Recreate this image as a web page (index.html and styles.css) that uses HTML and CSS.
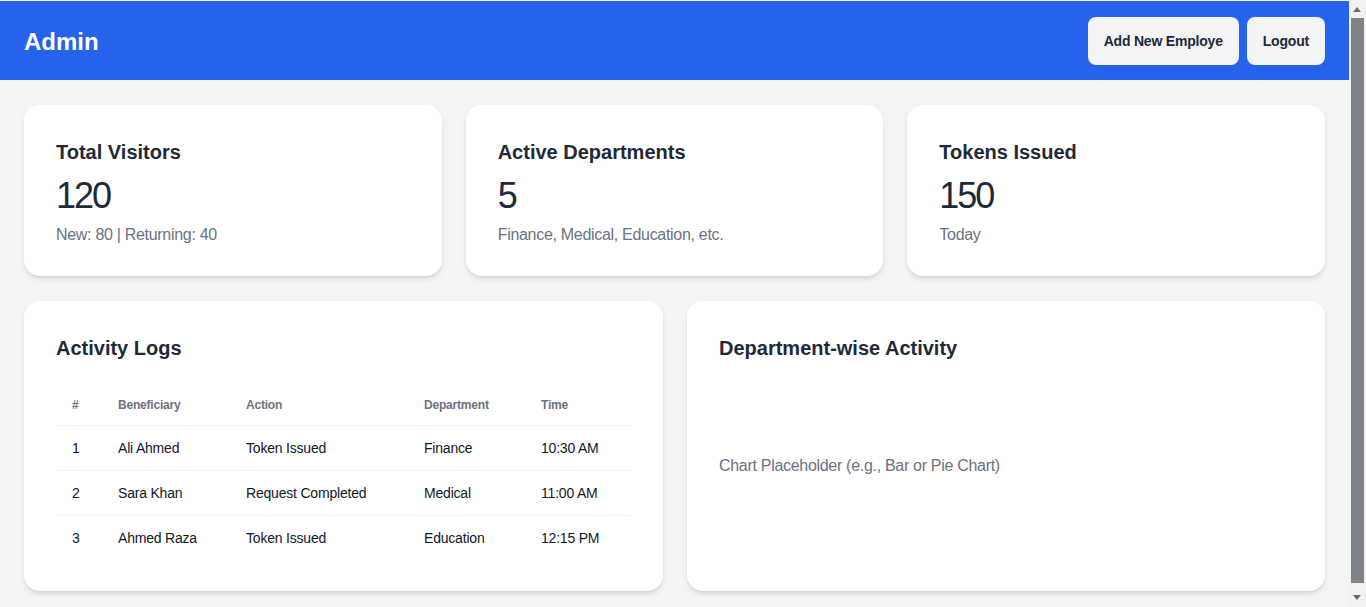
FILE: index.html
```html
<!DOCTYPE html>
<html lang="en">
<head>
<meta charset="utf-8">
<title>Admin Dashboard</title>
<link rel="stylesheet" href="styles.css">
</head>
<body>
<header class="topbar">
  <h1 class="brand">Admin</h1>
  <div class="actions">
    <button class="btn">Add New Employe</button>
    <button class="btn">Logout</button>
  </div>
</header>
<main class="main">
  <section class="stats">
    <div class="card stat">
      <h2 class="card-title">Total Visitors</h2>
      <p class="stat-value">120</p>
      <p class="stat-note">New: 80 | Returning: 40</p>
    </div>
    <div class="card stat">
      <h2 class="card-title">Active Departments</h2>
      <p class="stat-value">5</p>
      <p class="stat-note">Finance, Medical, Education, etc.</p>
    </div>
    <div class="card stat">
      <h2 class="card-title">Tokens Issued</h2>
      <p class="stat-value">150</p>
      <p class="stat-note">Today</p>
    </div>
  </section>
  <section class="panels">
    <div class="card panel">
      <h2 class="card-title panel-title">Activity Logs</h2>
      <table class="logs">
        <colgroup>
          <col class="c1"><col class="c2"><col class="c3"><col class="c4"><col class="c5">
        </colgroup>
        <thead>
          <tr><th>#</th><th>Beneficiary</th><th>Action</th><th>Department</th><th>Time</th></tr>
        </thead>
        <tbody>
          <tr><td>1</td><td>Ali Ahmed</td><td>Token Issued</td><td>Finance</td><td>10:30 AM</td></tr>
          <tr><td>2</td><td>Sara Khan</td><td>Request Completed</td><td>Medical</td><td>11:00 AM</td></tr>
          <tr><td>3</td><td>Ahmed Raza</td><td>Token Issued</td><td>Education</td><td>12:15 PM</td></tr>
        </tbody>
      </table>
    </div>
    <div class="card panel">
      <h2 class="card-title panel-title">Department-wise Activity</h2>
      <div class="chart">Chart Placeholder (e.g., Bar or Pie Chart)</div>
    </div>
  </section>
</main>
<div class="scrollbar" aria-hidden="true">
  <span class="arrow up"></span>
  <span class="thumb"></span>
  <span class="arrow down"></span>
</div>
</body>
</html>
```
FILE: styles.css
```css
* { box-sizing: border-box; }
html, body { margin: 0; padding: 0; }
body {
  background: #f3f4f6;
  border-top: 1px solid #ffffff;
  margin-right: 17px;
  font-family: "Liberation Sans", Arial, sans-serif;
  color: #1f2937;
}
.topbar {
  background: #2563eb;
  height: 79px;
  padding: 0 24px;
  display: flex;
  align-items: center;
  justify-content: space-between;
}
.brand {
  margin: 2px 0 0;
  color: #ffffff;
  font-size: 24px;
  font-weight: 700;
}
.actions { display: flex; gap: 8px; }
.btn {
  font-family: inherit;
  background: #f3f4f6;
  color: #1f2937;
  border: none;
  border-radius: 8px;
  height: 48px;
  padding: 0 16px;
  font-size: 14px;
  font-weight: 600;
  letter-spacing: -0.2px;
}
.main { padding: 25px 24px 24px; }
.stats {
  display: grid;
  grid-template-columns: repeat(3, 1fr);
  gap: 24px;
}
.card {
  background: #ffffff;
  border-radius: 16px;
  box-shadow: 0 4px 6px -1px rgba(0,0,0,0.1), 0 2px 4px -2px rgba(0,0,0,0.1);
  padding: 33px 32px 32px;
}
.stat { height: 171px; }
.card-title {
  margin: 0;
  font-size: 20px;
  line-height: 28px;
  font-weight: 700;
}
.stat-value {
  margin: 10px 0 0;
  font-size: 36px;
  line-height: 40px;
  letter-spacing: -2px;
}
.stat-note {
  margin: 7px 0 0;
  font-size: 16px;
  line-height: 24px;
  color: #6b7280;
  letter-spacing: -0.3px;
}
.panels {
  margin-top: 25px;
  display: grid;
  grid-template-columns: 1fr 1fr;
  gap: 24px;
}
.panel { height: 290px; display: flex; flex-direction: column; }
.panel-title { margin-bottom: 23px; }
.logs {
  width: 100%;
  border-collapse: collapse;
  table-layout: fixed;
  font-size: 14px;
}
.c1 { width: 46px; }
.c2 { width: 128px; }
.c3 { width: 178px; }
.c4 { width: 117px; }
.c5 { width: 106px; }
.logs th {
  text-align: left;
  font-size: 12px;
  line-height: 16px;
  font-weight: 600;
  color: #6b7280;
  padding: 12px 16px;
  border-bottom: 1px solid #f3f4f6;
  letter-spacing: -0.2px;
}
.logs td {
  padding: 12px 16px;
  line-height: 20px;
  color: #111827;
  border-bottom: 1px solid #f3f4f6;
  letter-spacing: -0.2px;
}
.logs tbody tr:last-child td { border-bottom: none; }
.chart {
  flex: 1;
  display: flex;
  align-items: center;
  color: #6b7280;
  font-size: 16px;
  margin-top: -13px;
  letter-spacing: -0.3px;
}
.scrollbar {
  position: fixed;
  top: 0;
  right: 0;
  width: 17px;
  height: 100%;
  background: #f1f1f1;
}
.thumb {
  position: absolute;
  left: 2px;
  top: 18px;
  width: 13px;
  height: 565px;
  background: #7f8289;
}
.arrow {
  position: absolute;
  left: 4px;
  width: 0;
  height: 0;
  border-left: 4.5px solid transparent;
  border-right: 4.5px solid transparent;
}
.arrow.up { top: 7px; border-bottom: 5px solid #6b6b6b; }
.arrow.down { bottom: 7px; border-top: 5px solid #6b6b6b; }
```
